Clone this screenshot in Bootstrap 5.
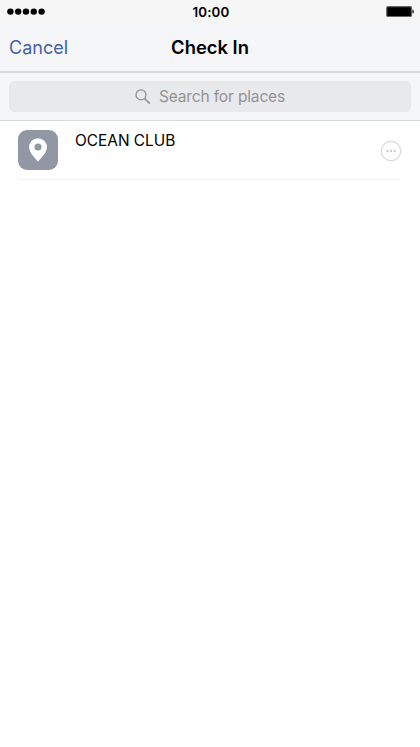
<!DOCTYPE html>
<html lang="en">
<head>
    <meta charset="UTF-8">
    <meta name="viewport" content="width=device-width, initial-scale=1.0">
    <title>Check In</title>
    <link href="https://cdn.jsdelivr.net/npm/bootstrap@5.3.0/dist/css/bootstrap.min.css" rel="stylesheet">
    <style>
        body {
            font-family: Inter, "Liberation Sans", sans-serif;
            color: #000;
            overflow: hidden;
        }

        .app-header {
            background: #f5f6f8;
        }

        .status-bar {
            height: 24px;
            padding: 0 6px 1px 7px;
            background: #f6f6f6;
        }

        .status-time {
            flex: none;
            font-size: 13.3px;
            font-weight: 600;
            line-height: 23px;
            letter-spacing: 0.15px;
            padding: 1px 0 0 1px;
        }

        .status-side {
            flex: 1 1 0;
        }

        .title-bar {
            height: 49px;
            padding: 0 9px 1px 9px;
            border-bottom: 2px solid #d9dadc;
        }

        .cancel-link {
            display: block;
            padding-top: 2px;
            color: #4162a8;
            font-size: 18px;
            line-height: 24px;
        }

        .page-title {
            font-size: 18.4px;
            font-weight: 600;
            line-height: 24px;
        }

        .search-bar {
            height: 48px;
            padding: 8px 9px;
            border-bottom: 1px solid #d8d9db;
        }

        .search-field {
            height: 31px;
            border-radius: 5px;
            background: #e8e9eb;
            color: #939395;
            font-size: 15.5px;
            letter-spacing: -0.15px;
        }

        .place-item {
            height: 59px;
            margin: 0 19px 0 18px;
            border-bottom: 1px solid #f3f3f4;
        }

        .place-icon {
            width: 40px;
            height: 40px;
            margin-top: 9px;
            border-radius: 9px;
            background: #9197a3;
        }

        .place-name {
            margin: 9px 0 0 17px;
            font-size: 15.4px;
            line-height: 21px;
        }

        .more-button {
            margin-top: 19px;
            margin-right: -1px;
        }
    </style>
</head>
<body class="bg-white">
    <header class="app-header">
        <!-- Status bar -->
        <div class="status-bar d-flex align-items-center">
            <div class="status-side d-flex">
                <svg width="39" height="8" fill="#000">
                    <circle cx="3.4" cy="3.6" r="3.2"/>
                    <circle cx="11.2" cy="3.6" r="3.2"/>
                    <circle cx="19" cy="3.6" r="3.2"/>
                    <circle cx="26.8" cy="3.6" r="3.2"/>
                    <circle cx="34.6" cy="3.6" r="3.2"/>
                </svg>
            </div>
            <div class="status-time">10:00</div>
            <div class="status-side d-flex justify-content-end">
                <svg width="28" height="12">
                    <rect x="0.7" y="0.6" width="24.8" height="9.9" rx="1.3" fill="#000" stroke="#666" stroke-width="1.2"/>
                    <path d="M26.4 3.7h.3a1.1 1.1 0 0 1 1.1 1.1v1.6a1.1 1.1 0 0 1-1.1 1.1h-.3z" fill="#222"/>
                </svg>
            </div>
        </div>

        <!-- Title -->
        <nav class="title-bar d-flex align-items-center">
            <div class="status-side"><a href="#" class="cancel-link text-decoration-none">Cancel</a></div>
            <h1 class="page-title mb-0">Check In</h1>
            <div class="status-side"></div>
        </nav>

        <!-- Search -->
        <div class="search-bar">
            <div class="search-field d-flex align-items-center justify-content-center">
                <svg class="me-2" width="16" height="16" fill="none" stroke="#939395" stroke-width="1.3">
                    <circle cx="6" cy="5.8" r="5"/>
                    <path d="M9.7 9.6l4.6 4.5" stroke-width="1.7" stroke-linecap="round"/>
                </svg>
                <span>Search for places</span>
            </div>
        </div>
    </header>

    <!-- Places -->
    <main>
        <div class="place-item d-flex align-items-start">
            <div class="place-icon d-flex align-items-center justify-content-center">
                <svg width="18" height="24" viewBox="0 0 18 24">
                    <path d="M9 0.2a8.9 8.9 0 0 0-8.9 8.9c0 5.2 4.6 9.8 8.9 14.6 4.3-4.8 8.9-9.4 8.9-14.6A8.9 8.9 0 0 0 9 .2zm0 5.4a3.5 3.5 0 1 1 0 7 3.5 3.5 0 0 1 0-7z" fill="#fff"/>
                </svg>
            </div>
            <div class="place-name">OCEAN CLUB</div>
            <svg class="more-button ms-auto" width="22" height="22">
                <circle cx="11" cy="11" r="9.7" fill="none" stroke="#dadada" stroke-width="1.2"/>
                <g fill="#cfcfcf">
                    <circle cx="7.5" cy="11" r="1.2"/>
                    <circle cx="11" cy="11" r="1.2"/>
                    <circle cx="14.5" cy="11" r="1.2"/>
                </g>
            </svg>
        </div>
    </main>

    <script src="https://cdn.jsdelivr.net/npm/bootstrap@5.3.0/dist/js/bootstrap.bundle.min.js"></script>
</body>
</html>
